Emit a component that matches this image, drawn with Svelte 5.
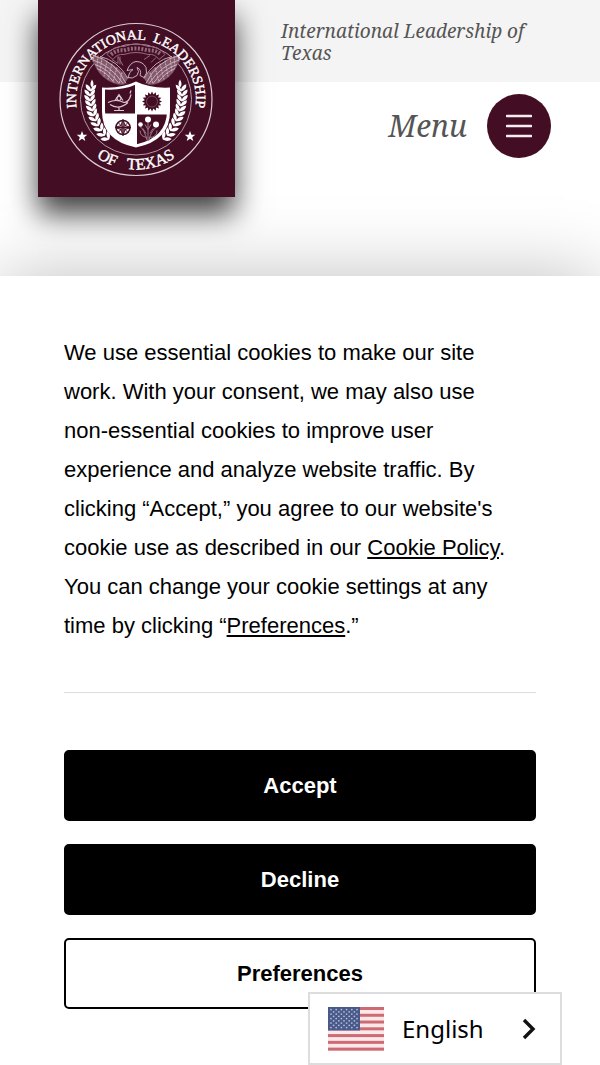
<script>
  const stripes = [0, 2, 4, 6, 8, 10, 12];
  const starRows = [0, 1, 2, 3, 4];
  const starCols = [0, 1, 2, 3, 4, 5];
  const sides = [1, -1];
  const rays = Array.from({ length: 16 }, (_, i) => i * 22.5);
  // Laurel leaves: stem position and lean, from the tip down to the stalk
  const leaves = [
    [45, -11, -4], [46, -6, 0], [46, -1, 4], [45, 4, 8], [44, 9, 13],
    [43, 14, 18], [41, 19, 23], [39, 24, 28], [36, 29, 34], [33, 34, 40], [29, 38, 48]
  ];
</script>

<div class="page">
  <header class="header">
    <div class="topbar"><p class="school">International Leadership of Texas</p></div>
    <a class="logo" href="#home" aria-label="International Leadership of Texas">
      <svg viewBox="0 0 197 197" aria-hidden="true">
        <defs>
          <path id="ring-top" d="M-60 0A60 60 0 0 1 60 0A60 60 0 0 1 -60 0" transform="rotate(-20)" />
          <path id="ring-bottom" d="M-70 0A70 70 0 0 0 70 0" />
          <clipPath id="shield-clip"><path d="M-31 -10Q-13 -9 0 -15Q13 -9 31 -10V11Q31 38 0 45Q-31 38 -31 11Z" /></clipPath>
        </defs>
        <g transform="translate(98 99.5)" fill="#fff">
          <circle r="76" fill="none" stroke="#dccbd3" stroke-width="1.2" />
          <circle r="55.5" fill="none" stroke="#b799a6" stroke-width="1" />
          {#each sides as side}
            <g transform="scale({side} 1)">
              <path transform="translate(-54 37)" d="M0 -5.5L1.4 -1.8 5.3 -1.7 2.2 .8 3.3 4.5 0 2.3 -3.3 4.5 -2.2 .8 -5.3 -1.7 -1.4 -1.8Z" />
              {#each leaves as [x, y, lean]}
                <g transform="translate({-x} {y}) rotate({-lean})">
                  <path d="M0 3Q-6 1 -5.500 -4Q-1 -3 0 1Q1 -3 5 -4Q5.500 1 0 3Z" />
                </g>
              {/each}
              <path d="M-44 -12Q-47 -15 -44 -20Q-41 -15 -44 -12Z" />
              <path d="M-44 -46Q-38 -43 -29 -38Q-16 -32 -8 -21L-12 -15Q-20 -14 -28 -19Q-38 -25 -43 -38Z" fill="#85596b" />
              <g fill="none" stroke="#ceb9c2" stroke-width=".9">
                <path d="M-43 -44Q-21 -39 -10 -16M-44 -40Q-25 -34 -13 -16M-41 -35Q-28 -31 -17 -16M-39 -31Q-29 -27 -22 -17M-36 -43Q-18 -39 -8 -21" />
                <path d="M-42 -45L-43 -38M-38 -44L-39 -32M-34 -42L-36 -27M-29 -39L-32 -23M-24 -36L-28 -20M-19 -32L-23 -18M-14 -27L-17 -16" stroke-dasharray="2 1" />
              </g>
            </g>
          {/each}
          <g fill="none" stroke="#95697c">
            <path d="M-29 -45Q-22 -54 -12 -53Q0 -58 12 -53Q22 -54 29 -45L23 -40Q19 -46 12 -45Q0 -49 -12 -45Q-19 -46 -23 -40Z" />
            <path d="M-25 -45Q-19 -50 -12 -49Q0 -53 12 -49Q19 -50 25 -45" stroke-width="4" stroke-dasharray="2 1.5" />
            <path d="M-24 -40L-18 -36L-18 -43L-13 -34M-16 -43V-35M14 -44L8 -40M20 -42L15 -37" />
          </g>
          <path d="M-8 -22Q-7 -28 -3 -30L-9 -29Q-6 -37 0 -38Q7 -38 10 -32Q12 -26 8 -22L4 -24Q6 -30 1 -32Q4 -28 1 -24Q-4 -20 -8 -22Z" fill="#45102a" stroke="#c7aebb" stroke-width="1" />
          <path d="M-34 -12Q-14 -11 0 -18Q14 -11 34 -12V12Q34 41 0 48Q-34 41 -34 12Z" />
          <g clip-path="url(#shield-clip)">
            <path d="M-32 -16H-1V14H-32ZM1 15H33V50H1Z" fill="#430e24" />
          </g>
          <!-- lamp -->
          <g fill="none" stroke="#d9c8d0" stroke-width="1.2">
            <path d="M-28 3Q-20 -1 -12 3Q-7 3 -5 -5M-26 5Q-17 11 -8 3M-17 8V11M-22 11H-12M-21 1L-17 -5L-13 1" />
            <circle cx="-17" cy="-1" r="2" /><path d="M-6 -6L-5 -9" />
          </g>
          <!-- sun -->
          <g transform="translate(16 2)" fill="#430e24">
            <circle r="7" />
            {#each rays as angle}<path transform="rotate({angle})" d="M-2 -6L0 -10L2 -6Z" />{/each}
            <circle r="5.5" fill="none" stroke="#71495b" stroke-width="1" />
          </g>
          <!-- compass -->
          <g transform="translate(-13 28)" fill="none" stroke="#430e24">
            <circle r="7" stroke-width="1.6" />
            <path d="M0 -8L2 -2 8 0 2 2 0 8 -2 2 -8 0 -2 -2Z" fill="#a98b98" stroke-width="1" />
            <path d="M0 -8V8M-8 0H8M-5 -5L5 5M5 -5L-5 5" stroke-width="1" />
          </g>
          <!-- flowers -->
          <g fill="none" stroke="#9b7686" stroke-width="1">
            <path d="M12 41V22M11 41Q9 31 4 27M13 41Q15 31 21 27M11 38Q4 37 4 31M13 38Q21 38 21 31M9 25L12 30L15 25M7 29L10 34M17 29L14 34" />
          </g>
          <circle cx="12" cy="20" r="3" /><circle cx="4.500" cy="25" r="2.3" /><circle cx="20" cy="25" r="3" />
          <text class="seal-top" text-anchor="middle"><textPath href="#ring-top" startOffset="115">INTERNATIONAL&nbsp; LEADERSHIP</textPath></text>
          <text class="seal-bottom" text-anchor="middle"><textPath href="#ring-bottom" startOffset="50%">OF&nbsp;&nbsp; TEXAS</textPath></text>
        </g>
      </svg>
    </a>
    <button class="menu" type="button">
      <span>Menu</span>
      <span class="burger">
        <svg viewBox="0 0 26 24" aria-hidden="true"><path d="M1 2H25M1 12H25M1 22H25" fill="none" stroke="#f5edf0" stroke-width="2.600" stroke-linecap="round" /></svg>
      </span>
    </button>
  </header>

  <section class="banner" aria-label="Cookie consent">
    <p class="message">We use essential cookies to make our site work. With your consent, we may also use non-essential cookies to improve user experience and analyze website traffic. By clicking “Accept,” you agree to our website's cookie use as described in our <a href="#policy">Cookie Policy</a>. You can change your cookie settings at any time by clicking “<a href="#preferences">Preferences</a>.”</p>
    <div class="actions">
      <button type="button">Accept</button>
      <button type="button">Decline</button>
      <button type="button" class="outline">Preferences</button>
    </div>
  </section>

  <button class="language" type="button">
    <svg class="flag" viewBox="0 0 56 44" aria-hidden="true">
      <rect width="56" height="44" fill="#fbe9ea" />
      {#each stripes as n}<rect y={n * 3.385} width="56" height="3" fill="#cd6b74" />{/each}
      <rect width="32" height="23.5" fill="#48598a" />
      {#each starRows as row}
        {#each starCols as col}
          <circle cx={3 + col * 5.2} cy={2.6 + row * 4.5} r=".9" fill="#b3bfd6" />
          {#if row < 4 && col < 5}<circle cx={5.6 + col * 5.2} cy={4.8 + row * 4.5} r=".9" fill="#b3bfd6" />{/if}
        {/each}
      {/each}
    </svg>
    <span>English</span>
    <svg class="chevron" viewBox="0 0 14 22" aria-hidden="true"><path d="M2 2L11 11L2 20" fill="none" stroke="#111" stroke-width="3.400" /></svg>
  </button>
</div>

<style>
  :global(body) { margin: 0; background: #fff; }
  .page { display: flex; flex-direction: column; min-height: 100vh; overflow-x: clip; }
  button { font: inherit; cursor: pointer; }
  .header {
    display: grid;
    grid-template-columns: 38px 197px 1fr;
    grid-template-rows: 82px auto;
    color: #555;
    font-family: "Noto Serif", "Droid Serif", "Liberation Serif", serif;
    font-style: italic;
  }
  .topbar { grid-area: 1 / 1 / 2 / 4; padding: 20px 48px 0 281px; background: #f4f4f4; }
  .school { margin: 0; font-size: 19px; line-height: 22px; }
  .logo {
    grid-area: 1 / 2 / 3 / 3;
    height: 197px;
    background: #430e24;
    box-shadow: 0 17px 28px rgba(0, 0, 0, .75);
  }
  .logo svg { display: block; width: 100%; height: 100%; }
  .seal-top, .seal-bottom {
    stroke: #fff;
    stroke-width: .4px;
    font-family: "Liberation Serif", serif;
    font-style: normal;
  }
  .seal-top { font-size: 14px; }
  .seal-bottom { font-size: 16px; }
  .menu {
    grid-area: 2 / 3 / 3 / 4;
    display: flex;
    align-items: center;
    align-self: start;
    justify-self: end;
    gap: 20px;
    margin: 12px 49px 0 0;
    padding: 0;
    border: 0;
    background: none;
    color: inherit;
    font-size: 30px;
    line-height: 40px;
  }
  .burger { display: grid; place-items: center; width: 64px; height: 64px; border-radius: 50%; background: #430e24; }
  .burger svg { width: 26px; height: 24px; }
  .banner {
    position: relative;
    margin-top: auto;
    padding: 57px 64px 56px;
    background: #fff;
    box-shadow: 0 0 70px rgba(0, 0, 0, .25);
    color: #000;
    font-family: "Liberation Sans", Arial, sans-serif;
    font-size: 22px;
  }
  .message { margin: 0; padding-right: 16px; line-height: 39px; }
  .message a { color: inherit; text-decoration-thickness: 2px; text-underline-offset: 2px; }
  .actions { display: grid; gap: 23px; margin-top: 47px; padding-top: 57px; border-top: 1px solid #ddd; }
  .actions button {
    height: 71px;
    border: 2px solid #000;
    border-radius: 5px;
    background: #000;
    color: #fff;
    font-weight: 700;
  }
  .actions .outline { background: #fff; color: #000; }
  .language {
    position: fixed;
    right: 38px;
    bottom: 0;
    display: flex;
    align-items: center;
    gap: 18px;
    width: 254px;
    height: 73px;
    padding: 0 24px 0 18px;
    border: 2px solid #ddd;
    background: #fff;
    color: #000;
    font-family: "Noto Sans", sans-serif;
    font-size: 24px;
  }
  .flag { width: 56px; height: 44px; }
  .chevron { width: 14px; height: 22px; margin-left: auto; }
</style>
